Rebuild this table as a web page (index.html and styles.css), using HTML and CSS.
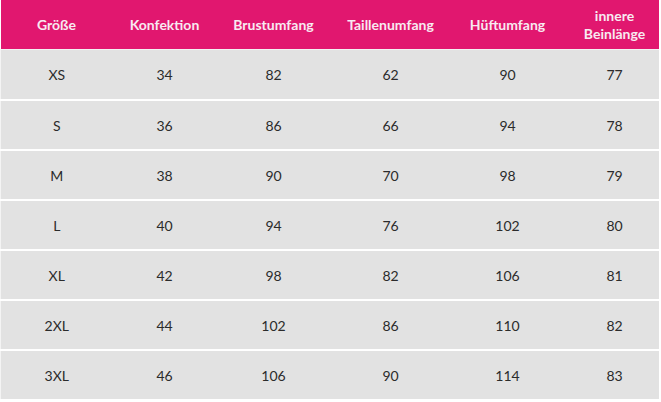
FILE: index.html
```html
<!DOCTYPE html>
<html lang="de">
<head>
<meta charset="utf-8">
<link rel="stylesheet" href="styles.css">
</head>
<body>
<table class="size-table">
  <colgroup>
    <col class="c1"><col class="c2"><col class="c3"><col class="c4"><col class="c5"><col class="c6">
  </colgroup>
  <thead>
    <tr>
      <th>Größe</th><th>Konfektion</th><th>Brustumfang</th><th>Taillenumfang</th><th>Hüftumfang</th><th class="last">innere<br>Beinlänge</th>
    </tr>
  </thead>
  <tbody>
    <tr><td>XS</td><td>34</td><td>82</td><td>62</td><td>90</td><td class="last">77</td></tr>
    <tr><td>S</td><td>36</td><td>86</td><td>66</td><td>94</td><td class="last">78</td></tr>
    <tr><td>M</td><td>38</td><td>90</td><td>70</td><td>98</td><td class="last">79</td></tr>
    <tr><td>L</td><td>40</td><td>94</td><td>76</td><td>102</td><td class="last">80</td></tr>
    <tr><td>XL</td><td>42</td><td>98</td><td>82</td><td>106</td><td class="last">81</td></tr>
    <tr><td>2XL</td><td>44</td><td>102</td><td>86</td><td>110</td><td class="last">82</td></tr>
    <tr><td>3XL</td><td>46</td><td>106</td><td>90</td><td>114</td><td class="last">83</td></tr>
  </tbody>
</table>
</body>
</html>
```

FILE: styles.css
```css
html, body {
  margin: 0;
  padding: 0;
  background: #ffffff;
}

.size-table {
  width: 658px;
  border-collapse: collapse;
  table-layout: fixed;
  font-family: Lato, "Liberation Sans", sans-serif;
}

.c1 { width: 112px; }
.c2 { width: 104px; }
.c3 { width: 114px; }
.c4 { width: 120px; }
.c5 { width: 114px; }
.c6 { width: 94px; }

.size-table th {
  background: #e1176f;
  color: #f8eaf1;
  font-weight: bold;
  font-size: 14px;
  line-height: 18px;
  height: 49px;
  padding: 0;
  text-align: center;
  vertical-align: middle;
}

.size-table td {
  background: #e2e2e2;
  color: #2b2b2b;
  font-size: 14px;
  height: 48px;
  padding: 0;
  text-align: center;
  vertical-align: middle;
  border-top: 2px solid #ffffff;
}

.size-table .last {
  padding-left: 6px;
}

.size-table tbody tr:first-child td {
  border-top: 1px solid #f2f2f2;
  height: 49px;
}

.size-table td:first-child {
  border-left: 1px solid #f4f4f4;
}
```
